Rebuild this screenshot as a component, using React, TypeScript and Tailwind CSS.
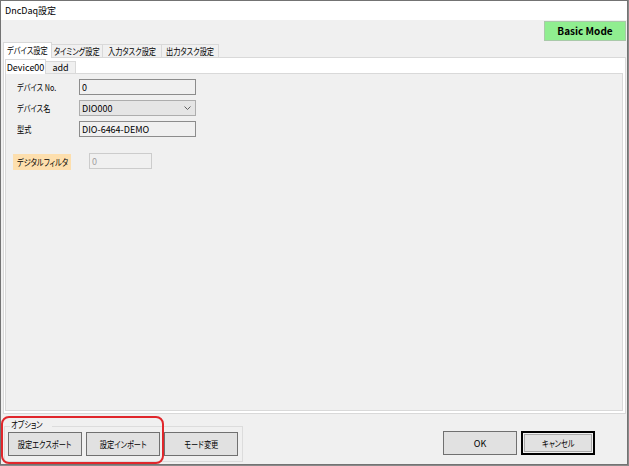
import React from "react";

const J = ({ children, left }: { children: React.ReactNode; left?: boolean }) => (
  <span className={`inline-block whitespace-nowrap scale-x-[0.8] ${left ? "origin-left" : "origin-center"}`}>{children}</span>
);

const Tab = ({ label, w, selected, small }: { label: React.ReactNode; w: number; selected?: boolean; small?: boolean }) => {
  if (selected) {
    return (
      <div
        className={`relative z-10 -mb-px flex items-center justify-center whitespace-nowrap bg-white border border-b-0 border-[#d9d9d9] ${small ? "h-[15px]" : "h-[16px]"}`}
        style={{ width: w }}
      >
        {label}
      </div>
    );
  }
  return (
    <div
      className={`flex items-center justify-center whitespace-nowrap bg-[#f0f0f0] border border-b-0 border-l-0 border-[#d9d9d9] ${small ? "h-[12px]" : "h-[13px]"}`}
      style={{ width: w }}
    >
      {label}
    </div>
  );
};

const Btn = ({ label, def }: { label: React.ReactNode; def?: boolean }) =>
  def ? (
    <div className="w-[74px] h-[24px] border-2 border-black bg-[#e1e1e1] shadow-[inset_0_0_0_1px_#f0f0f0,inset_0_0_0_2px_#a8a8a8] flex items-center justify-center">
      {label}
    </div>
  ) : (
    <div className="w-[74px] h-[24px] border border-[#707070] bg-[#e1e1e1] flex items-center justify-center">
      {label}
    </div>
  );

export default function App() {
  return (
    <div className="w-[629px] h-[466px] bg-[#8a8a8a] font-['Noto_Sans_CJK_JP','Liberation_Sans',sans-serif] [font-feature-settings:'palt'] text-[9px] leading-none text-black">
      <div className="relative w-[628px] h-[465px] border border-[#737373] bg-[#f0f0f0] flex flex-col">
        {/* title bar */}
        <div className="h-[19px] bg-white flex items-center pl-[4px] shrink-0">DncDaq設定</div>

        {/* basic mode */}
        <div className="flex justify-end mt-[1px] mr-[1px] shrink-0">
          <div className="w-[82px] h-[20px] bg-[#90ee90] border border-[#a9c9a9] flex items-center justify-center font-bold text-[10px]">
            Basic Mode
          </div>
        </div>

        {/* outer tabs */}
        <div className="flex items-end pl-[2px] mt-[1px] h-[15px] shrink-0">
          <Tab label={<J>デバイス設定</J>} w={49} selected />
          <Tab label={<J>タイミング設定</J>} w={51} />
          <Tab label={<J>入力タスク設定</J>} w={59} />
          <Tab label={<J>出力タスク設定</J>} w={57} />
        </div>

        {/* outer page */}
        <div className="ml-[2px] w-[623px] h-[357px] bg-white border border-[#d9d9d9] flex flex-col pl-[1px] shrink-0">
          <div className="flex items-end pt-px h-[15px] shrink-0">
            <Tab label="Device00" w={41} selected small />
            <Tab label="add" w={30} small />
          </div>
          <div className="w-[618px] h-[338px] bg-[#f0f0f0] border border-[#d9d9d9] flex flex-col">
            <div className="flex flex-col gap-[5px] pl-[11px] pt-[5px]">
              <div className="flex items-center h-[16px]">
                <div className="w-[62px]"><J left>デバイス No.</J></div>
                <div className="w-[117px] h-[16px] border border-[#8c8c8c] bg-[#f0f0f0] flex items-center pl-[2px]">0</div>
              </div>
              <div className="flex items-center h-[16px]">
                <div className="w-[62px]"><J left>デバイス名</J></div>
                <div className="w-[117px] h-[16px] border border-[#adadad] bg-[#e5e5e5] flex items-center justify-between pl-[2px] pr-[4px]">
                  <span>DIO000</span>
                  <svg width="7" height="4" viewBox="0 0 7 4">
                    <polyline points="0.5,0.5 3.5,3.5 6.5,0.5" fill="none" stroke="#606060" strokeWidth="1" />
                  </svg>
                </div>
              </div>
              <div className="flex items-center h-[16px]">
                <div className="w-[62px]"><J left>型式</J></div>
                <div className="w-[117px] h-[16px] border border-[#8c8c8c] bg-[#f0f0f0] flex items-center pl-[2px]">DIO-6464-DEMO</div>
              </div>
            </div>
            <div className="flex items-start pl-[7px] mt-[16px]">
              <div className="w-[58px] h-[16px] mt-px bg-[#fddfae] flex items-center pl-[4px] overflow-hidden"><J left>デジタルフィルタ</J></div>
              <div className="ml-[18px] w-[63px] h-[16px] border border-[#cccccc] bg-[#f0f0f0] text-[#a0a0a0] flex items-center pl-[2px]">0</div>
            </div>
          </div>
        </div>

        {/* bottom */}
        <div className="flex justify-between items-start mt-[12px] shrink-0">
          <div className="relative ml-[3px] w-[239px] h-[36px] border border-[#dcdcdc] flex gap-[4px] pl-[3px] pt-[5px]">
            <div className="absolute left-[5px] top-[-7px] px-px bg-[#f0f0f0]"><J left>オプション</J></div>
            <Btn label={<J>設定エクスポート</J>} />
            <Btn label={<J>設定インポート</J>} />
            <Btn label={<J>モード変更</J>} />
          </div>
          <div className="flex gap-[4px] mt-[5px] mr-[32px]">
            <Btn label="OK" />
            <Btn label={<J>キャンセル</J>} def />
          </div>
        </div>

        {/* red annotation */}
        <div className="absolute left-0 top-[415px] w-[163px] h-[48px] border-2 border-[#e0262b] rounded-[8px] pointer-events-none" />
      </div>
    </div>
  );
}
